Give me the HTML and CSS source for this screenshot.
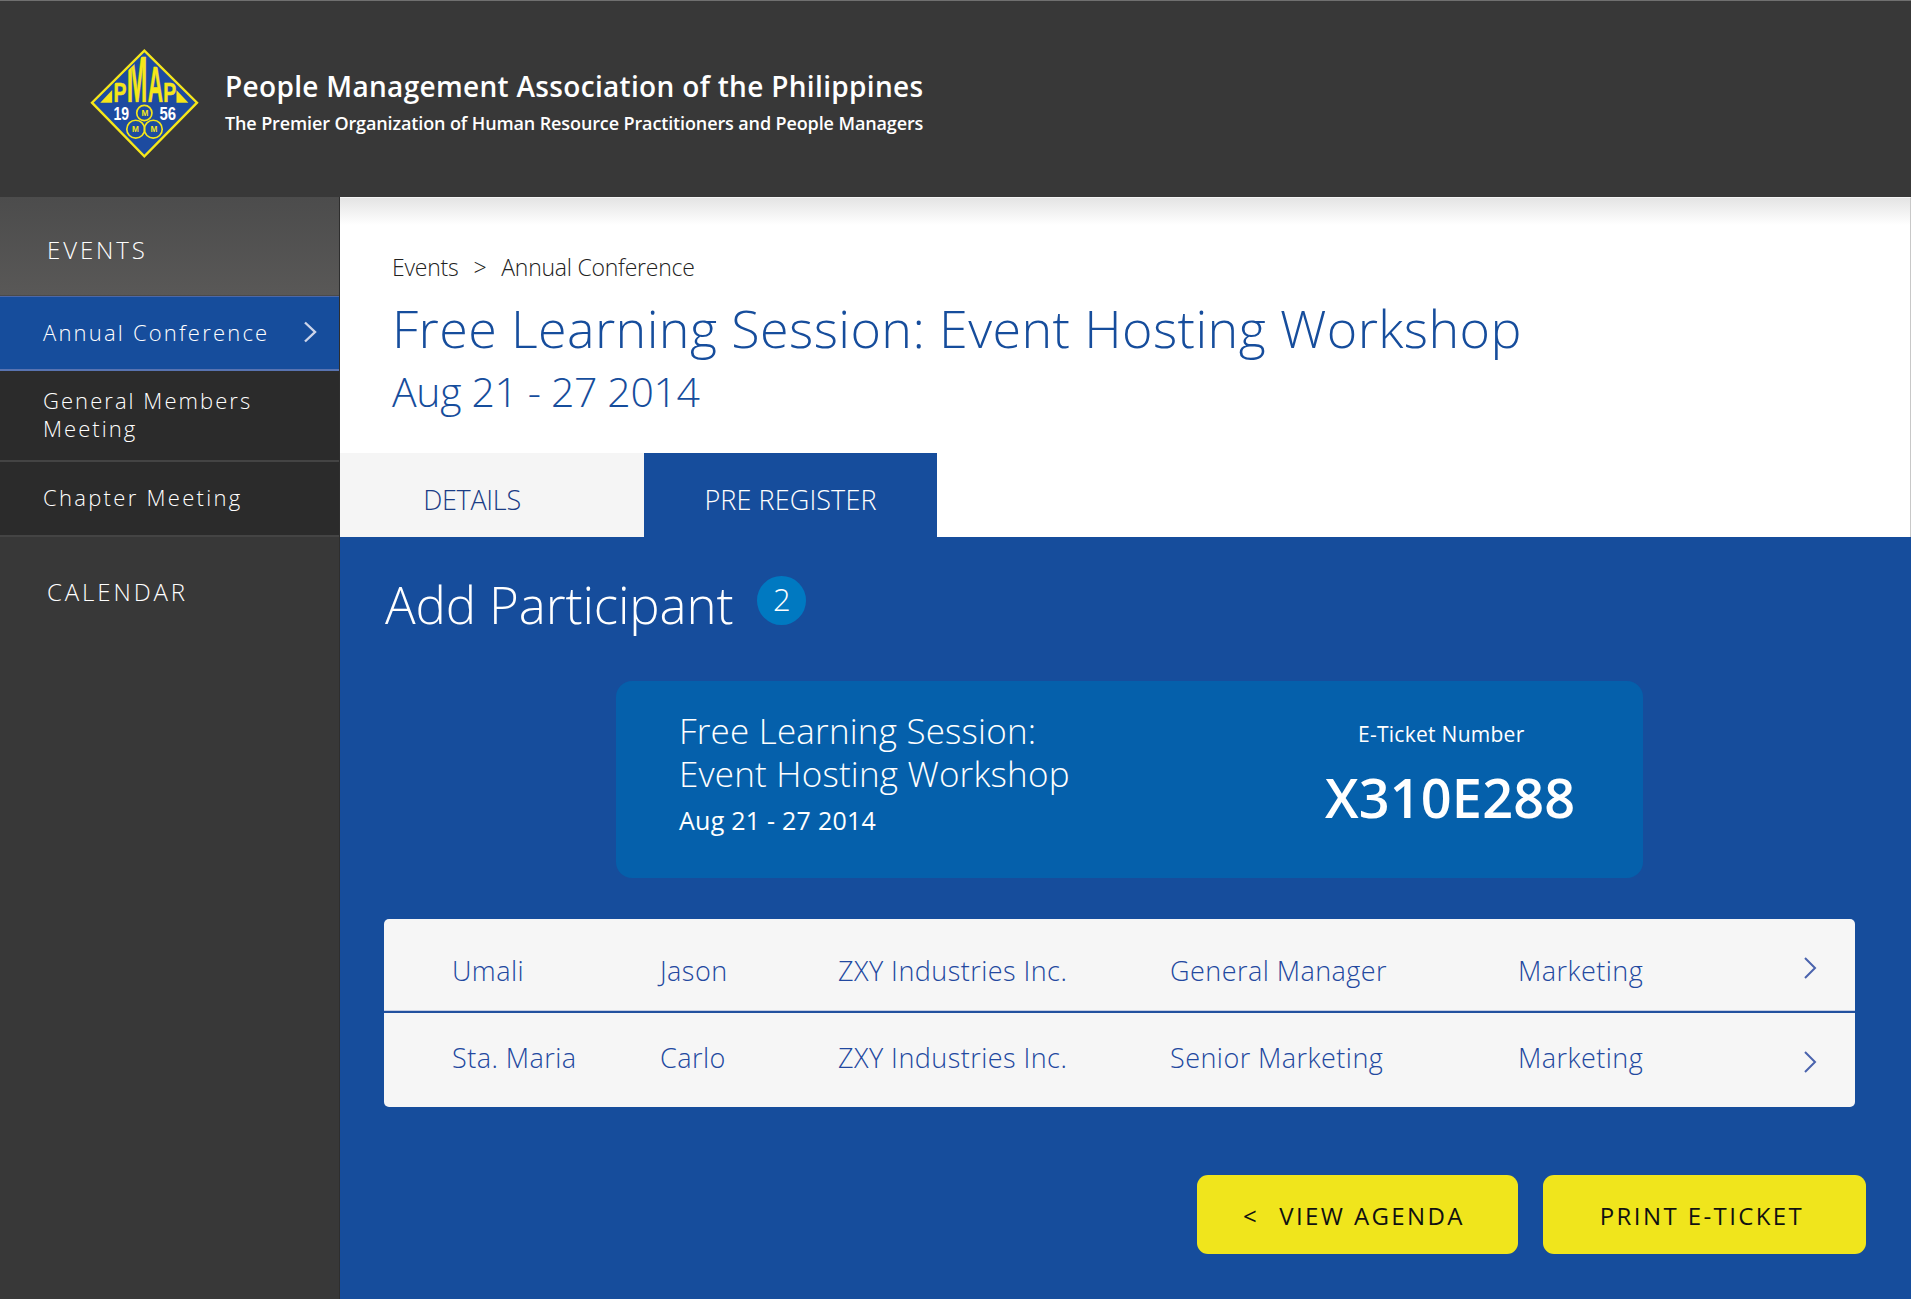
FILE: index.html
```html
<!DOCTYPE html>
<html lang="en">
<head>
<meta charset="utf-8">
<title>Add Participant</title>
<link rel="stylesheet" href="styles.css">
</head>
<body>
<header class="topbar">
  <svg class="logo" viewBox="62 54 327 329" width="109" height="109" aria-label="PMAP 1956">
    <defs>
      <clipPath id="roof"><polygon points="225,70 372,216 78,216"/></clipPath>
    </defs>
    <polygon points="225,59 384,216 225,378 67,216" fill="#1d4ba0" stroke="#f5e61a" stroke-width="7"/>
    <polygon points="128,178 128,216 92,216" fill="#f5e61a"/>
    <polygon points="322,178 322,216 358,216" fill="#f5e61a"/>
    <g class="logo-letters" clip-path="url(#roof)">
      <text x="132" y="215" font-size="84" textLength="39" lengthAdjust="spacingAndGlyphs">P</text>
      <text x="172" y="215" font-size="196" textLength="62" lengthAdjust="spacingAndGlyphs">M</text>
      <text x="235" y="215" font-size="150" textLength="46" lengthAdjust="spacingAndGlyphs">A</text>
      <text x="282" y="215" font-size="84" textLength="39" lengthAdjust="spacingAndGlyphs">P</text>
    </g>
    <g class="logo-years">
      <text x="132" y="268" font-size="56" textLength="47" lengthAdjust="spacingAndGlyphs">19</text>
      <text x="271" y="268" font-size="56" textLength="50" lengthAdjust="spacingAndGlyphs">56</text>
    </g>
    <g fill="none" stroke="#f5e61a" stroke-width="5">
      <circle cx="225" cy="247" r="23"/>
      <circle cx="199" cy="296" r="27"/>
      <circle cx="252" cy="296" r="27"/>
    </g>
    <g class="logo-m">
      <text x="227" y="256" font-size="25">M</text>
      <text x="198" y="305" font-size="25">M</text>
      <text x="254" y="305" font-size="25">M</text>
    </g>
  </svg>
  <div class="org">
    <div class="org-name">People Management Association of the Philippines</div>
    <div class="org-tag">The Premier Organization of Human Resource Practitioners and People Managers</div>
  </div>
</header>
<div class="shell">
  <nav class="side">
    <div class="side-head side-head-active">EVENTS</div>
    <a class="side-item side-item-on">Annual Conference
      <svg class="side-chev" viewBox="0 0 14 22" width="14" height="22"><path d="M2 1.500l10 9.500-10 9.500" fill="none" stroke="#cdd5ea" stroke-width="2.400"/></svg>
    </a>
    <a class="side-item side-item-two">General Members Meeting</a>
    <a class="side-item">Chapter Meeting</a>
    <div class="side-head side-head-plain">CALENDAR</div>
  </nav>
  <main class="content">
    <section class="intro">
      <div class="crumbs"><span>Events</span><span class="crumb-sep">&gt;</span><span>Annual Conference</span></div>
      <h1 class="event-title">Free Learning Session: Event Hosting Workshop</h1>
      <div class="event-date">Aug 21 - 27 2014</div>
    </section>
    <div class="tabs">
      <div class="tab tab-details">DETAILS</div>
      <div class="tab tab-register">PRE REGISTER</div>
    </div>
    <section class="panel">
      <div class="panel-head">
        <h2 class="panel-title">Add Participant</h2>
        <span class="badge">2</span>
      </div>
      <div class="ticket">
        <div class="ticket-info">
          <div class="ticket-name">Free Learning Session:<br>Event Hosting Workshop</div>
          <div class="ticket-date">Aug 21 - 27 2014</div>
        </div>
        <div class="ticket-code">
          <div class="ticket-label">E-Ticket Number</div>
          <div class="ticket-number">X310E288</div>
        </div>
      </div>
      <div class="people">
        <div class="person">
          <span>Umali</span><span>Jason</span><span>ZXY Industries Inc.</span><span>General Manager</span><span>Marketing</span>
          <svg class="row-chev" viewBox="0 0 14 22" width="14" height="22"><path d="M2 1l10 10-10 10" fill="none" stroke="#4a63ad" stroke-width="2"/></svg>
        </div>
        <div class="person person-second">
          <span>Sta. Maria</span><span>Carlo</span><span>ZXY Industries Inc.</span><span>Senior Marketing</span><span>Marketing</span>
          <svg class="row-chev" viewBox="0 0 14 22" width="14" height="22"><path d="M2 1l10 10-10 10" fill="none" stroke="#4a63ad" stroke-width="2"/></svg>
        </div>
      </div>
      <div class="actions">
        <a class="btn btn-agenda"><span class="btn-lt">&lt;</span>VIEW AGENDA</a>
        <a class="btn btn-print">PRINT E-TICKET</a>
      </div>
    </section>
  </main>
</div>
</body>
</html>
```
FILE: styles.css
```css
* { box-sizing: border-box; }
html, body { margin: 0; padding: 0; }
body {
  width: 1911px;
  height: 1299px;
  overflow: hidden;
  background: #383838;
  font-family: "Open Sans", "Noto Sans", sans-serif;
  color: #fff;
}
.topbar {
  height: 197px;
  background: #383838;
  border-top: 1px solid #707070;
  display: flex;
  align-items: center;
  padding-left: 90px;
  padding-top: 11px;
}
.logo { display: block; flex: none; margin-top: -3px; margin-right: 26px; }
.logo-letters text { font-family: "Liberation Sans", sans-serif; font-weight: 700; fill: #f5e61a; stroke: #f5e61a; stroke-width: 1.5; }
.logo-years text { font-family: "Liberation Sans", sans-serif; font-weight: 700; fill: #fff; }
.logo-m text { font-family: "Liberation Sans", sans-serif; font-weight: 700; fill: #f5e61a; text-anchor: middle; }
.org { margin-top: -6px; }
.org-name { font-size: 28px; font-weight: 600; line-height: 38px; letter-spacing: 0.32px; white-space: nowrap; }
.org-tag { font-size: 18px; font-weight: 600; line-height: 26px; letter-spacing: -0.12px; margin-top: 5px; white-space: nowrap; }
.shell {
  display: grid;
  grid-template-columns: 340px 1fr;
  height: 1102px;
}
.side { background: #383838; border-right: 1px solid #2e2e2e; }
.side-head { letter-spacing: 2.9px; font-size: 24px; font-weight: 300; padding-left: 47px; }
.side-head-active {
  height: 99px;
  line-height: 106px;
  background: linear-gradient(#4c4c4c, #595857);
  border-bottom: 1px solid #4a4a4a;
}
.side-head-plain { height: 100px; line-height: 109px; }
.side-item {
  display: flex;
  align-items: center;
  justify-content: space-between;
  height: 75px;
  background: #2b2b2b;
  border-bottom: 2px solid #444;
  padding: 0 22px 3px 43px;
  font-size: 22px;
  font-weight: 300;
  line-height: 28px;
  letter-spacing: 2.3px;
}
.side-item-on { background: #164d9c; border-top: 1px solid #4c68a8; border-bottom: 2px solid #5873b1; padding-bottom: 2px; letter-spacing: 2.2px; }
.side-item-two { height: 91px; padding-right: 60px; letter-spacing: 2.05px; }
.content { display: flex; flex-direction: column; min-width: 0; }
.intro {
  height: 256px;
  padding: 52px 0 0 52px;
  color: #164d9c;
  background: linear-gradient(#e4e4e4, #fff 27px);
  border-top: 1px solid #f4f4f4;
  border-right: 1px solid #c8c8c8;
}
.crumbs { display: flex; font-size: 23px; font-weight: 300; line-height: 34px; color: #222; letter-spacing: -0.25px; }
.crumb-sep { margin: 0 15px; }
.event-title { margin: 0; font-size: 52px; font-weight: 300; line-height: 70px; letter-spacing: 0.4px; margin-top: 9px; white-space: nowrap; }
.event-date { font-size: 41px; font-weight: 300; line-height: 56px; letter-spacing: -0.35px; }
.tabs { display: flex; height: 84px; background: #fff; border-right: 1px solid #c8c8c8; }
.tab { display: flex; align-items: center; justify-content: center; font-size: 27px; font-weight: 300; padding-top: 9px; }
.tab-details { width: 304px; background: #f5f5f5; color: #1a3c85; padding-right: 40px; letter-spacing: -0.3px; }
.tab-register { width: 293px; background: #164d9c; color: #fff; letter-spacing: 0.1px; }
.panel {
  flex: 1;
  background: #164d9c;
  padding: 39px 0 0 44px;
}
.panel-head { display: flex; align-items: flex-start; height: 105px; }
.panel-title { margin: -3px 0 0; font-size: 51px; font-weight: 300; line-height: 62px; letter-spacing: -0.12px; padding-left: 1px; white-space: nowrap; }
.badge {
  width: 49px;
  height: 49px;
  margin-left: 24px;
  border-radius: 50%;
  background: #0079c1;
  font-size: 31px;
  font-weight: 300;
  line-height: 46px;
  text-align: center;
}
.ticket {
  width: 1027px;
  height: 197px;
  margin-left: 232px;
  border-radius: 16px;
  background: #0560ab;
  display: flex;
  justify-content: space-between;
  padding: 28px 0 0 63px;
}
.ticket-name { font-size: 35px; font-weight: 300; line-height: 43px; letter-spacing: 0.2px; }
.ticket-date { font-size: 25px; font-weight: 400; line-height: 34px; margin-top: 8px; letter-spacing: 0.25px; }
.ticket-code { width: 318px; flex: none; padding-top: 10px; }
.ticket-label { font-size: 21px; font-weight: 400; line-height: 30px; letter-spacing: 0.27px; padding-left: 33px; }
.ticket-number { font-size: 54px; font-weight: 600; line-height: 74px; margin-top: 11px; letter-spacing: 0.15px; }
.people {
  width: 1471px;
  height: 188px;
  margin-top: 41px;
  background: #f6f6f6;
  border-radius: 5px;
  color: #22489f;
  overflow: hidden;
}
.person {
  display: grid;
  grid-template-columns: 208px 178px 332px 348px 285px 14px;
  align-items: center;
  height: 94px;
  padding: 10px 0 0 68px;
  font-size: 27px;
  font-weight: 300;
  letter-spacing: 0.45px;
  white-space: nowrap;
  border-bottom: 2px solid #22519f;
  box-shadow: inset 0 -1px 0 #c5cde2;
}
.person-second { border-bottom: 0; box-shadow: none; padding: 0 0 5px 68px; }
.row-chev { display: block; margin-top: -4px; }
.person-second .row-chev { margin-top: 8px; }
.actions {
  display: flex;
  gap: 25px;
  margin-top: 68px;
  margin-left: 813px;
}
.btn {
  display: flex;
  align-items: center;
  justify-content: center;
  height: 79px;
  padding-top: 2px;
  background: #f0e51c;
  border-radius: 11px;
  color: #111;
  font-size: 24px;
  font-weight: 400;
  letter-spacing: 2.4px;
  white-space: nowrap;
}
.btn-agenda { width: 321px; padding-right: 7px; }
.btn-print { width: 323px; padding-right: 5px; }
.btn-lt { margin-right: 20px; }
```
